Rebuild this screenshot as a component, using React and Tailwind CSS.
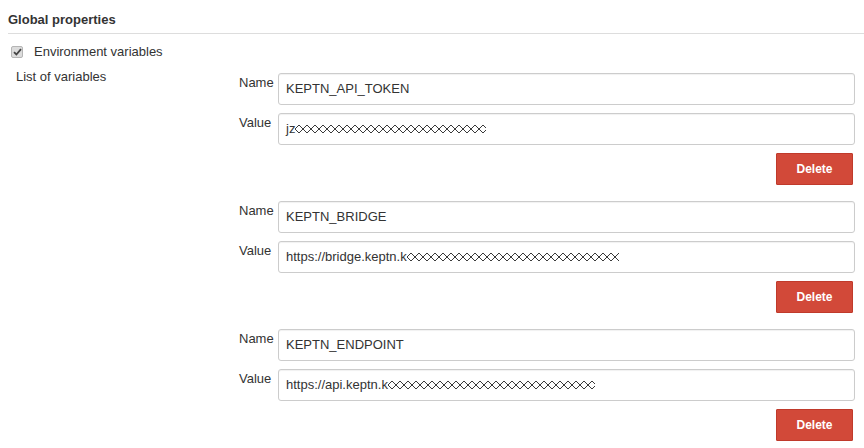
import React from "react";

function Scribble({ width }) {
  const period = 8;
  const n = Math.ceil(width / period);
  const h = 9;
  const m = h / 2;
  let a = `M0 ${m}`;
  let b = `M0 ${m}`;
  for (let i = 0; i < n; i++) {
    const x0 = i * period;
    a += ` L${x0 + period / 2} 0.5 L${x0 + period} ${m}`;
    b += ` L${x0 + period / 2} ${h - 0.5} L${x0 + period} ${m}`;
  }
  return (
    <svg width={width} height={h + 1} viewBox={`0 -0.5 ${width} ${h + 1}`} className="inline-block align-middle -mt-[1px]">
      <path d={a} fill="none" stroke="#3a3a3a" strokeWidth="1" />
      <path d={b} fill="none" stroke="#3a3a3a" strokeWidth="1" />
    </svg>
  );
}

function Field({ label, children }) {
  return (
    <div className="flex items-start">
      <div className="w-[39px] pt-[2px] text-[13px] leading-4 text-[#333]">{label}</div>
      <div className="flex-1 h-[32px] border border-[#ccc] rounded-[3px] shadow-[inset_0_1px_1px_rgba(0,0,0,0.06)] px-[7px] flex items-center text-[13px] text-[#333] whitespace-nowrap overflow-hidden">
        {children}
      </div>
    </div>
  );
}

function Block({ name, prefix, scribble }) {
  return (
    <div className="flex flex-col gap-[8px]">
      <Field label="Name">{name}</Field>
      <Field label="Value">
        <span>{prefix}</span>
        <Scribble width={scribble} />
      </Field>
      <div className="flex justify-end pr-[2px]">
        <button className="w-[77px] h-[32px] bg-[#d24939] border border-[#c03a2b] text-white font-bold text-[12px] rounded-[1px]">
          Delete
        </button>
      </div>
    </div>
  );
}

export default function App() {
  return (
    <div className="w-[864px] h-[448px] bg-white overflow-hidden" style={{ fontFamily: '"Liberation Sans", Arial, sans-serif' }}>
      <div className="ml-[8px] pt-[12px] pb-[5px] border-b border-[#ddd]">
        <div className="text-[13px] leading-4 font-bold text-[#333]">Global properties</div>
      </div>
      <div className="flex items-center h-[22px] mt-[7px] pl-[11px]">
        <span className="w-[12px] h-[12px] rounded-[2px] bg-[#dcdcdc] border border-[#b5b5b5] flex items-center justify-center">
          <svg width="9" height="8" viewBox="0 0 9 8">
            <path d="M1 4.2 L3.4 6.5 L8 1.2" fill="none" stroke="#444" strokeWidth="1.8" />
          </svg>
        </span>
        <span className="ml-[11px] text-[13px] text-[#333]">Environment variables</span>
      </div>
      <div className="flex mt-[6px]">
        <div className="w-[239px] pl-[16px] text-[13px] leading-4 text-[#333]">List of variables</div>
        <div className="flex-1 pr-[9px] pt-[4px] flex flex-col gap-[16px]">
          <Block name="KEPTN_API_TOKEN" prefix="jz" scribble={191} />
          <Block name="KEPTN_BRIDGE" prefix="https://bridge.keptn.k" scribble={212} />
          <Block name="KEPTN_ENDPOINT" prefix="https://api.keptn.k" scribble={207} />
        </div>
      </div>
    </div>
  );
}
